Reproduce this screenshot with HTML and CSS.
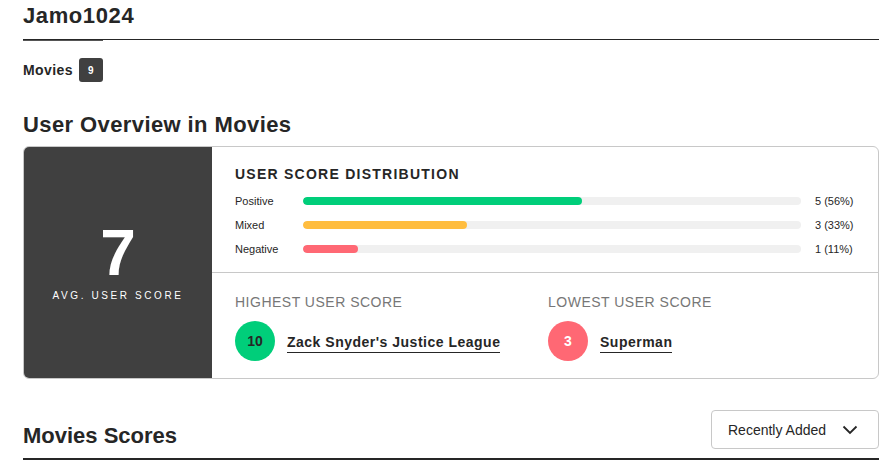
FILE: index.html
```html
<!DOCTYPE html>
<html>
<head>
<meta charset="utf-8">
<link rel="stylesheet" href="styles.css">
</head>
<body>
<div class="page">
  <header class="profile-head">
    <h1 class="username">Jamo1024</h1>
  </header>
  <nav class="tabs">
    <div class="tab active">
      <span class="tab-label">Movies</span>
      <span class="tab-count">9</span>
    </div>
  </nav>

  <h2 class="section-title">User Overview in Movies</h2>

  <section class="overview-card">
    <div class="avg-panel">
      <div class="avg-score">7</div>
      <div class="avg-label">AVG. USER SCORE</div>
    </div>
    <div class="details">
      <div class="distribution">
        <h3 class="dist-title">USER SCORE DISTRIBUTION</h3>
        <div class="dist-grid">
          <span class="dist-label">Positive</span>
          <div class="bar"><div class="fill positive" style="width:56%"></div></div>
          <span class="dist-value">5 (56%)</span>

          <span class="dist-label">Mixed</span>
          <div class="bar"><div class="fill mixed" style="width:33%"></div></div>
          <span class="dist-value">3 (33%)</span>

          <span class="dist-label">Negative</span>
          <div class="bar"><div class="fill negative" style="width:11%"></div></div>
          <span class="dist-value">1 (11%)</span>
        </div>
      </div>
      <div class="extremes">
        <div class="extreme">
          <div class="extreme-label">HIGHEST USER SCORE</div>
          <div class="extreme-row">
            <span class="score-circle green">10</span>
            <a class="extreme-title">Zack Snyder's Justice League</a>
          </div>
        </div>
        <div class="extreme">
          <div class="extreme-label">LOWEST USER SCORE</div>
          <div class="extreme-row">
            <span class="score-circle red">3</span>
            <a class="extreme-title">Superman</a>
          </div>
        </div>
      </div>
    </div>
  </section>

  <div class="scores-head">
    <h2 class="scores-title">Movies Scores</h2>
    <div class="dropdown">
      <span class="dropdown-text">Recently Added</span>
      <svg class="chevron" width="16" height="10" viewBox="0 0 16 10"><path d="M1.5 1.5 L8 8 L14.5 1.5" fill="none" stroke="#262626" stroke-width="1.8"/></svg>
    </div>
  </div>
</div>
</body>
</html>
```

FILE: styles.css
```css
* { box-sizing: border-box; }
html, body { margin: 0; padding: 0; background: #fff; }
body {
  font-family: "Liberation Sans", Arial, sans-serif;
  color: #262626;
  overflow: hidden;
}
.page {
  padding: 0 10px 0 23px;
}
.profile-head {
  padding-top: 3px;
  padding-bottom: 10px;
  border-bottom: 1px solid #262626;
}
.username {
  margin: 0;
  font-size: 22px;
  line-height: 26px;
  font-weight: 700;
  letter-spacing: 0.6px;
}
.tabs {
  display: flex;
}
.tab {
  display: flex;
  align-items: center;
  gap: 6px;
  padding-top: 17px;
  border-top: 1px solid #555;
}
.tab-label {
  font-size: 14px;
  font-weight: 700;
  letter-spacing: 0.4px;
}
.tab-count {
  display: inline-flex;
  align-items: center;
  justify-content: center;
  width: 24px;
  height: 24px;
  background: #404040;
  color: #fff;
  border-radius: 3px;
  font-size: 10px;
  font-weight: 700;
}
.section-title {
  margin: 30px 0 8px;
  font-size: 22px;
  line-height: 26px;
  font-weight: 700;
  letter-spacing: 0.4px;
}
.overview-card {
  display: flex;
  height: 233px;
  border: 1px solid #c8c8c8;
  border-radius: 6px;
  overflow: hidden;
}
.avg-panel {
  width: 188px;
  flex: none;
  background: #404040;
  color: #fff;
  display: flex;
  flex-direction: column;
  align-items: center;
  justify-content: center;
  padding-top: 4px;
}
.avg-score {
  font-size: 64px;
  line-height: 50px;
  font-weight: 700;
}
.avg-label {
  margin-top: 12px;
  font-size: 10px;
  line-height: 12px;
  letter-spacing: 2.6px;
  font-weight: 400;
}
.details {
  flex: 1;
  display: flex;
  flex-direction: column;
}
.distribution {
  height: 126px;
  padding: 19px 18px 0 23px;
  border-bottom: 1px solid #c8c8c8;
}
.dist-title {
  margin: 0 0 6px;
  font-size: 14px;
  line-height: 17px;
  font-weight: 700;
  letter-spacing: 1.25px;
}
.dist-grid {
  display: grid;
  grid-template-columns: 68px 1fr 46px;
  grid-auto-rows: 24px;
  align-items: center;
}
.dist-label {
  font-size: 11px;
  color: #262626;
}
.dist-value {
  font-size: 11px;
  white-space: nowrap;
}
.bar {
  height: 8px;
  background: #f0f0f0;
  border-radius: 4px;
  overflow: hidden;
  margin-right: 14px;
}
.fill { height: 100%; border-radius: 4px; }
.fill.positive { background: #00ce7a; }
.fill.mixed { background: #ffbd3f; }
.fill.negative { background: #ff6874; }
.extremes {
  flex: 1;
  display: flex;
  padding: 21px 18px 0 23px;
}
.extreme {
  width: 313px;
}
.extreme-label {
  font-size: 14px;
  line-height: 17px;
  color: #777;
  letter-spacing: 0.5px;
}
.extreme-row {
  display: flex;
  align-items: center;
  gap: 12px;
  margin-top: 10px;
}
.score-circle {
  width: 40px;
  height: 40px;
  border-radius: 50%;
  display: inline-flex;
  align-items: center;
  justify-content: center;
  font-size: 14px;
  font-weight: 700;
}
.score-circle.green { background: #00ce7a; color: #262626; }
.score-circle.red { background: #ff6874; color: #fff; }
.extreme-title {
  font-size: 14px;
  font-weight: 700;
  color: #262626;
  letter-spacing: 0.5px;
  padding-bottom: 2px;
  border-bottom: 1px solid #262626;
  margin-top: 4px;
}
.scores-head {
  display: flex;
  justify-content: space-between;
  align-items: flex-end;
  margin-top: 31px;
  padding-bottom: 9px;
  border-bottom: 2px solid #262626;
}
.scores-title {
  margin: 0;
  font-size: 22px;
  line-height: 26px;
  font-weight: 700;
}
.dropdown {
  width: 168px;
  height: 39px;
  border: 1px solid #c8c8c8;
  border-radius: 4px;
  display: flex;
  align-items: center;
  justify-content: space-between;
  padding: 0 20px 0 16px;
}
.dropdown-text {
  font-size: 14px;
  color: #262626;
}
.chevron { display: block; }
```
